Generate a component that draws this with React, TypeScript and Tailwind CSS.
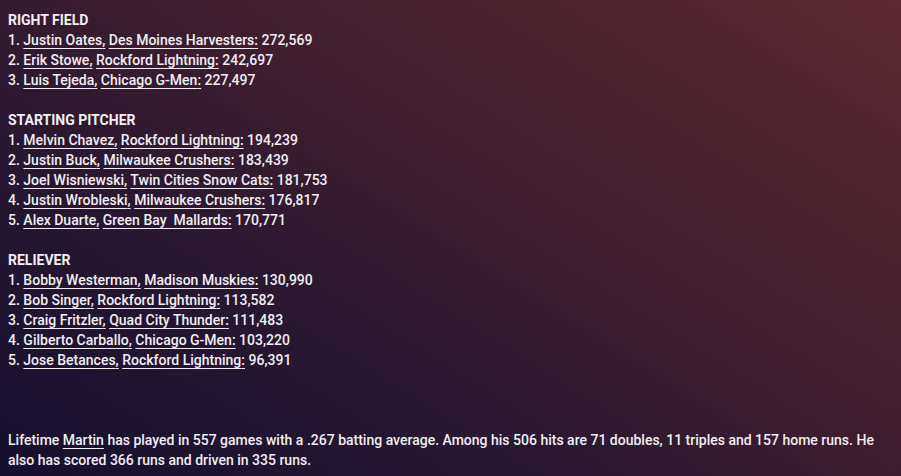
import React from 'react';

type Entry = { player: string; team: string; votes: string };

const sections: { title: string; entries: Entry[] }[] = [
    {
        title: 'RIGHT FIELD',
        entries: [
            { player: 'Justin Oates', team: 'Des Moines Harvesters', votes: '272,569' },
            { player: 'Erik Stowe', team: 'Rockford Lightning', votes: '242,697' },
            { player: 'Luis Tejeda', team: 'Chicago G-Men', votes: '227,497' },
        ],
    },
    {
        title: 'STARTING PITCHER',
        entries: [
            { player: 'Melvin Chavez', team: 'Rockford Lightning', votes: '194,239' },
            { player: 'Justin Buck', team: 'Milwaukee Crushers', votes: '183,439' },
            { player: 'Joel Wisniewski', team: 'Twin Cities Snow Cats', votes: '181,753' },
            { player: 'Justin Wrobleski', team: 'Milwaukee Crushers', votes: '176,817' },
            { player: 'Alex Duarte', team: 'Green Bay\u00a0 Mallards', votes: '170,771' },
        ],
    },
    {
        title: 'RELIEVER',
        entries: [
            { player: 'Bobby Westerman', team: 'Madison Muskies', votes: '130,990' },
            { player: 'Bob Singer', team: 'Rockford Lightning', votes: '113,582' },
            { player: 'Craig Fritzler', team: 'Quad City Thunder', votes: '111,483' },
            { player: 'Gilberto Carballo', team: 'Chicago G-Men', votes: '103,220' },
            { player: 'Jose Betances', team: 'Rockford Lightning', votes: '96,391' },
        ],
    },
];

const linkClass = 'underline underline-offset-[3px] decoration-1';

export default function App() {
    return (
        <div className="w-[901px] h-[476px] overflow-hidden bg-[linear-gradient(32deg,#16102e_0%,#2a1830_35%,#45202e_65%,#5e2933_100%)] text-[#f1eef2] font-['Roboto',sans-serif] font-medium text-[14px] leading-[20px]">
            <div className="px-2 pt-[10px] flex flex-col gap-5">
                {sections.map((section) => (
                    <div key={section.title}>
                        <div className="font-bold">{section.title}</div>
                        {section.entries.map((e, i) => (
                            <div key={e.player}>
                                {i + 1}. <span className={linkClass}>{e.player},</span>{' '}
                                <span className={linkClass}>{e.team}:</span> {e.votes}
                            </div>
                        ))}
                    </div>
                ))}
                <p className="mt-10">
                    Lifetime <span className={linkClass}>Martin</span> has played in 557 games with a .267 batting average. Among his 506 hits are 71 doubles, 11 triples and 157 home runs. He also has scored 366 runs and driven in 335 runs.
                </p>
            </div>
        </div>
    );
}
